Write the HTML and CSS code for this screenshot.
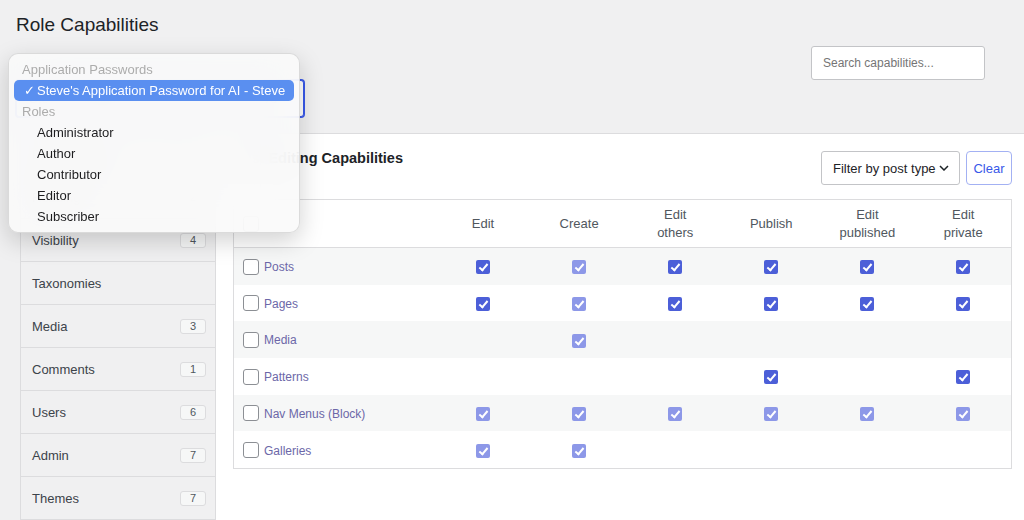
FILE: index.html
```html
<!DOCTYPE html>
<html lang="en">
<head>
  <meta charset="UTF-8">
  <title>Role Capabilities</title>
  <link rel="stylesheet" href="styles.css">
</head>
<body>
  <header class="page-head">
    <h1>Role Capabilities</h1>
  </header>

  <div class="toolbar">
    <div class="role-select">Steve's Application Password for AI - Steve</div>
    <input class="search" type="text" placeholder="Search capabilities...">
  </div>

  <div class="layout">
    <ul class="sections">
      <li class="active">Post Editing <span class="count">6</span></li>
      <li>Reading <span class="count">2</span></li>
      <li>Visibility <span class="count">4</span></li>
      <li>Taxonomies</li>
      <li>Media <span class="count">3</span></li>
      <li>Comments <span class="count">1</span></li>
      <li>Users <span class="count">6</span></li>
      <li>Admin <span class="count">7</span></li>
      <li>Themes <span class="count">7</span></li>
    </ul>

    <main class="panel">
      <div class="panel-head">
        <h2>Post Editing Capabilities</h2>
        <div class="filters">
          <div class="filter">
            Filter by post type
            <svg width="10" height="6" viewBox="0 0 10 6"><path d="M1 1l4 4 4-4" fill="none" stroke="#1d2327" stroke-width="1.5"/></svg>
          </div>
          <button class="clear">Clear</button>
        </div>
      </div>

      <table class="caps">
        <thead>
          <tr>
            <th class="name"><span class="box"></span></th>
            <th>Edit</th>
            <th>Create</th>
            <th>Edit<br>others</th>
            <th>Publish</th>
            <th>Edit<br>published</th>
            <th>Edit<br>private</th>
          </tr>
        </thead>
        <tbody>
          <tr>
            <td class="name"><span class="box"></span><a href="#">Posts</a></td>
            <td><span class="cb"></span></td>
            <td><span class="cb dim"></span></td>
            <td><span class="cb"></span></td>
            <td><span class="cb"></span></td>
            <td><span class="cb"></span></td>
            <td><span class="cb"></span></td>
          </tr>
          <tr>
            <td class="name"><span class="box"></span><a href="#">Pages</a></td>
            <td><span class="cb"></span></td>
            <td><span class="cb dim"></span></td>
            <td><span class="cb"></span></td>
            <td><span class="cb"></span></td>
            <td><span class="cb"></span></td>
            <td><span class="cb"></span></td>
          </tr>
          <tr>
            <td class="name"><span class="box"></span><a href="#">Media</a></td>
            <td></td>
            <td><span class="cb dim"></span></td>
            <td></td>
            <td></td>
            <td></td>
            <td></td>
          </tr>
          <tr>
            <td class="name"><span class="box"></span><a href="#">Patterns</a></td>
            <td></td>
            <td></td>
            <td></td>
            <td><span class="cb"></span></td>
            <td></td>
            <td><span class="cb"></span></td>
          </tr>
          <tr>
            <td class="name"><span class="box"></span><a href="#">Nav Menus (Block)</a></td>
            <td><span class="cb dim"></span></td>
            <td><span class="cb dim"></span></td>
            <td><span class="cb dim"></span></td>
            <td><span class="cb dim"></span></td>
            <td><span class="cb dim"></span></td>
            <td><span class="cb dim"></span></td>
          </tr>
          <tr>
            <td class="name"><span class="box"></span><a href="#">Galleries</a></td>
            <td><span class="cb dim"></span></td>
            <td><span class="cb dim"></span></td>
            <td></td>
            <td></td>
            <td></td>
            <td></td>
          </tr>
        </tbody>
      </table>
    </main>
  </div>

  <!-- menu ouvert du sélecteur de rôle -->
  <div class="menu">
    <div class="group">Application Passwords</div>
    <div class="item selected"><span class="tick">✓</span>Steve's Application Password for AI - Steve</div>
    <div class="group">Roles</div>
    <div class="item">Administrator</div>
    <div class="item">Author</div>
    <div class="item">Contributor</div>
    <div class="item">Editor</div>
    <div class="item">Subscriber</div>
  </div>
</body>
</html>
```

FILE: styles.css
```css
body {
  margin: 0;
  font-family: "Liberation Sans", Arial, sans-serif;
  font-size: 13px;
  background-color: #f0f0f1;
  color: #1d2327;
}

.page-head {
  padding: 14px 16px 0;
}

.page-head h1 {
  margin: 0;
  font-size: 19px;
  font-weight: 400;
  line-height: 22px;
}

.toolbar {
  display: flex;
  justify-content: space-between;
  align-items: flex-start;
  margin-top: 10px;
  padding: 0 39px 0 16px;
}

.role-select {
  margin-top: 34px;
  width: 288px;
  height: 37px;
  box-sizing: border-box;
  padding: 0 12px;
  line-height: 35px;
  background: #fff;
  border: 1px solid #3858e9;
  box-shadow: 0 0 0 1px #3858e9;
  border-radius: 3px;
}

.search {
  width: 174px;
  height: 34px;
  box-sizing: border-box;
  padding: 0 11px;
  font-family: inherit;
  font-size: 12px;
  background: #fff;
  border: 1px solid #c3c4c7;
  border-radius: 3px;
}

.search::placeholder {
  color: #757575;
}

.layout {
  display: flex;
  margin-top: 16px;
}

.sections {
  list-style: none;
  margin: 0 0 0 20px;
  padding: 0;
  width: 196px;
  box-sizing: border-box;
  border-left: 1px solid #dcdcde;
  border-right: 1px solid #dcdcde;
}

.sections li {
  display: flex;
  justify-content: space-between;
  align-items: center;
  height: 42px;
  padding: 0 9px 0 11px;
  border-bottom: 1px solid #dcdcde;
  color: #3c434a;
}

.count {
  width: 26px;
  height: 15px;
  box-sizing: border-box;
  line-height: 13px;
  text-align: center;
  font-size: 11px;
  color: #50575e;
  background: #f6f7f7;
  border: 1px solid #dcdcde;
  border-radius: 3px;
}

.panel {
  flex: 1;
  background: #fff;
  border-top: 1px solid #dcdcde;
  padding: 14px 12px 20px 17px;
}

.panel-head {
  display: flex;
  justify-content: space-between;
  align-items: flex-start;
}

.panel-head h2 {
  margin: 0;
  font-size: 14.5px;
  line-height: 20px;
}

.filters {
  display: flex;
  gap: 6px;
  margin-top: 3px;
}

.filter {
  display: flex;
  align-items: center;
  justify-content: space-between;
  width: 139px;
  height: 34px;
  box-sizing: border-box;
  padding: 0 10px 0 11px;
  border: 1px solid #c3c4c7;
  border-radius: 3px;
}

.clear {
  width: 46px;
  height: 34px;
  font-family: inherit;
  font-size: 13px;
  color: #3858e9;
  background: #fff;
  border: 1px solid #a3b1f3;
  border-radius: 4px;
}

.caps {
  width: 100%;
  margin-top: 14px;
  border-collapse: collapse;
  table-layout: fixed;
  border: 1px solid #dcdcde;
}

.caps th {
  height: 47px;
  padding: 0;
  font-weight: 400;
  line-height: 18px;
  color: #50575e;
  border-bottom: 1px solid #dcdcde;
}

.caps th.name {
  width: 192px;
  text-align: left;
}

.caps td {
  height: 36.7px;
  padding: 0;
  text-align: center;
}

.caps tbody tr:nth-child(odd) {
  background: #f6f7f7;
}

.caps .name {
  padding-left: 9px;
  text-align: left;
}

.caps .name a {
  font-size: 12px;
  color: #6c67a8;
  text-decoration: none;
  vertical-align: middle;
}

.box {
  display: inline-block;
  width: 16px;
  height: 16px;
  box-sizing: border-box;
  margin-right: 5px;
  vertical-align: middle;
  background: #fff;
  border: 1px solid #8c8f94;
  border-radius: 3px;
}

.cb {
  display: inline-block;
  position: relative;
  width: 14px;
  height: 14px;
  vertical-align: middle;
  background: #4c5fd8;
  border-radius: 2px;
}

.cb::after {
  content: "";
  position: absolute;
  left: 5px;
  top: 2px;
  width: 3px;
  height: 7px;
  border: solid #fff;
  border-width: 0 2px 2px 0;
  transform: rotate(40deg);
}

.cb.dim {
  background: #8d98e8;
}

.menu {
  position: absolute;
  left: 8px;
  top: 53px;
  width: 292px;
  box-sizing: border-box;
  padding: 5px;
  background: rgba(250, 250, 250, 0.9);
  backdrop-filter: blur(20px);
  border: 0.5px solid rgba(0, 0, 0, 0.12);
  border-radius: 10px;
  box-shadow: 0 8px 24px rgba(0, 0, 0, 0.18);
}

.menu .group,
.menu .item {
  height: 21px;
  line-height: 21px;
  white-space: nowrap;
}

.menu .group {
  padding-left: 8px;
  color: #acacac;
}

.menu .item {
  padding-left: 23px;
  color: #1d1d1f;
}

.menu .item.selected {
  background: #5a8ff0;
  color: #fff;
  border-radius: 5px;
}

.tick {
  display: inline-block;
  width: 13px;
  margin-left: -13px;
}
```
